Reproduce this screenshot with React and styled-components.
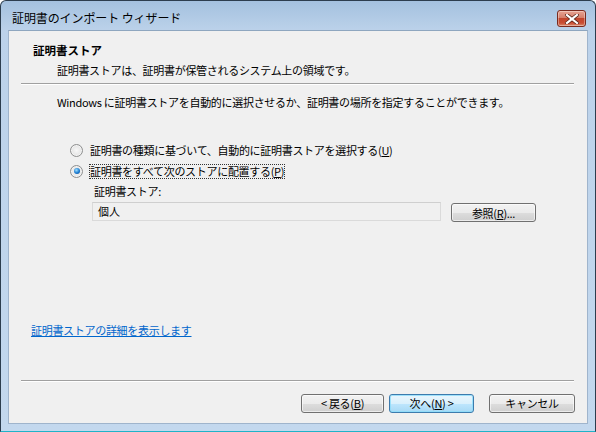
import styled, { createGlobalStyle } from 'styled-components';

const GlobalStyle = createGlobalStyle`
  html, body {
    margin: 0;
    padding: 0;
    background: #ffffff;
  }
  body {
    font-family: 'Noto Sans CJK JP', 'Noto Sans', sans-serif;
    font-size: 11px;
    color: #000;
  }
`;

const App = () => {
  return (
    <>
      <GlobalStyle />
      <Window>
        <TitleBar>
          <TitleText>証明書のインポート ウィザード</TitleText>
          <CloseButton aria-label='close'>
            <svg width='14' height='10' viewBox='0 0 14 10'>
              <path
                d='M2 1 L12 9 M12 1 L2 9'
                stroke='#5a2418'
                strokeWidth='3.6'
                strokeLinecap='square'
              />
              <path
                d='M2 1 L12 9 M12 1 L2 9'
                stroke='#ffffff'
                strokeWidth='2.2'
                strokeLinecap='square'
              />
            </svg>
          </CloseButton>
        </TitleBar>

        <Client>
          <Header>
            <HeaderTitle>証明書ストア</HeaderTitle>
            <HeaderSub>証明書ストアは、証明書が保管されるシステム上の領域です。</HeaderSub>
          </Header>
          <Separator />

          <Body>
            <Intro>
              Windows に証明書ストアを自動的に選択させるか、証明書の場所を指定することができます。
            </Intro>

            <RadioGroup>
              <RadioRow>
                <Radio />
                <RadioLabel>
                  証明書の種類に基づいて、自動的に証明書ストアを選択する(<u>U</u>)
                </RadioLabel>
              </RadioRow>
              <RadioRow>
                <Radio checked />
                <RadioLabel focused>
                  証明書をすべて次のストアに配置する(<u>P</u>)
                </RadioLabel>
              </RadioRow>
            </RadioGroup>

            <StoreBlock>
              <StoreLabel>証明書ストア:</StoreLabel>
              <StoreRow>
                <StoreInput>個人</StoreInput>
                <PushButton width='85px' offset='1px'>
                  参照(<u>R</u>)...
                </PushButton>
              </StoreRow>
            </StoreBlock>

            <Spacer />
            <HelpLink>証明書ストアの詳細を表示します</HelpLink>
          </Body>

          <Separator />
          <Footer>
            <PushButton width='83px'>
              &lt; 戻る(<u>B</u>)
            </PushButton>
            <PushButton width='85px' primary>
              次へ(<u>N</u>) &gt;
            </PushButton>
            <CancelGap />
            <PushButton width='86px'>キャンセル</PushButton>
          </Footer>
        </Client>
      </Window>
    </>
  );
};

export default App;

const Window = styled.div`
  width: 596px;
  height: 432px;
  box-sizing: border-box;
  border: 1px solid #2c3d4e;
  border-bottom-color: #1fb3c8;
  border-radius: 6px 6px 0 0;
  background: linear-gradient(to bottom, #a4c1df 0px, #bcd2ea 30px, #c3d8ee 100%);
  display: flex;
  flex-direction: column;
  overflow: hidden;
`;

const TitleBar = styled.div`
  height: 29px;
  flex-shrink: 0;
  display: flex;
  align-items: center;
  justify-content: space-between;
  padding: 0 9px 0 11px;
`;

const TitleText = styled.div`
  font-size: 12px;
  color: #000;
  margin-top: 4px;
  letter-spacing: -0.1px;
`;

const CloseButton = styled.div`
  width: 29px;
  height: 17px;
  margin-top: 6px;
  border: 1px solid #7a2a1e;
  border-radius: 3px;
  box-sizing: border-box;
  background: linear-gradient(
    to bottom,
    #e8a493 0%,
    #d57f6b 45%,
    #c2452c 50%,
    #c94d33 80%,
    #db8c70 100%
  );
  box-shadow: inset 0 0 0 1px rgba(255, 255, 255, 0.35);
  display: flex;
  align-items: center;
  justify-content: center;
`;

const Client = styled.div`
  flex: 1;
  margin: 0 7px 7px 7px;
  background: #f0f0f0;
  border: 1px solid #9fb4cc;
  border-top-color: #8ea6bf;
  display: flex;
  flex-direction: column;
  padding: 0 13px 0 12px;
`;

const Header = styled.div`
  padding: 11px 0 5px 12px;
  display: flex;
  flex-direction: column;
`;

const HeaderTitle = styled.div`
  font-weight: bold;
  font-size: 11.5px;
  line-height: 16px;
`;

const HeaderSub = styled.div`
  margin: 4px 0 0 24px;
  line-height: 16px;
  letter-spacing: -0.3px;
`;

const Separator = styled.div`
  height: 1px;
  background: #a0a0a0;
  border-bottom: 1px solid #ffffff;
  flex-shrink: 0;
`;

const Body = styled.div`
  flex: 1;
  display: flex;
  flex-direction: column;
  padding: 9px 0 0 0;
`;

const Intro = styled.div`
  margin-left: 36px;
  line-height: 16px;
  letter-spacing: -0.3px;
`;

const RadioGroup = styled.div`
  margin: 32px 0 0 49px;
  display: flex;
  flex-direction: column;
  gap: 5px;
`;

const RadioRow = styled.div`
  display: flex;
  align-items: center;
  height: 16px;
`;

const Radio = styled.span`
  width: 13px;
  height: 13px;
  border-radius: 50%;
  box-sizing: border-box;
  border: 1px solid #8e8f8f;
  background: radial-gradient(circle at 50% 50%, #f8f8f8 0%, #e6e6e6 60%, #d0d0d0 100%);
  box-shadow: inset 0 0 0 1px #f4f4f4;
  margin-right: 6px;
  position: relative;
  flex-shrink: 0;

  &::after {
    content: '';
    display: ${(props) => (props.checked ? 'block' : 'none')};
    position: absolute;
    left: 2.5px;
    top: 2.5px;
    width: 6px;
    height: 6px;
    border-radius: 50%;
    background: radial-gradient(circle at 40% 35%, #9fe0ff 0%, #1a7ad0 55%, #0b4a8a 100%);
  }
`;

const RadioLabel = styled.span`
  line-height: 15px;
  letter-spacing: -0.3px;
  padding: 0 1px;
  outline: ${(props) => (props.focused ? '1px dotted #333' : 'none')};
  outline-offset: -1px;
`;

const StoreBlock = styled.div`
  margin: 4px 0 0 71px;
  display: flex;
  flex-direction: column;
`;

const StoreLabel = styled.div`
  margin-left: 2px;
  line-height: 16px;
  letter-spacing: -0.3px;
`;

const StoreRow = styled.div`
  display: flex;
  align-items: flex-start;
  gap: 10px;
  margin-top: 3px;
`;

const StoreInput = styled.div`
  width: 349px;
  height: 19px;
  box-sizing: border-box;
  border: 1px solid #dadada;
  border-top-color: #cfcfcf;
  background: #f0f0f0;
  padding: 0 5px;
  line-height: 17px;
`;

const PushButton = styled.div`
  width: ${(props) => props.width};
  height: 19px;
  margin-top: ${(props) => props.offset || '0'};
  box-sizing: border-box;
  border: 1px solid ${(props) => (props.primary ? '#3d7bad' : '#707070')};
  border-radius: 3px;
  background: ${(props) =>
    props.primary
      ? 'linear-gradient(to bottom, #eaf6fd 0%, #d9f0fc 50%, #bee6fd 51%, #a7d9f5 100%)'
      : 'linear-gradient(to bottom, #f2f2f2 0%, #ebebeb 50%, #dddddd 51%, #cfcfcf 100%)'};
  box-shadow: inset 0 0 0 1px
    ${(props) => (props.primary ? 'rgba(140, 220, 250, 0.8)' : 'rgba(255, 255, 255, 0.6)')};
  display: flex;
  align-items: center;
  justify-content: center;
  line-height: 16px;
  letter-spacing: -0.3px;
`;

const Spacer = styled.div`
  flex: 1;
`;

const HelpLink = styled.a`
  color: #0066cc;
  text-decoration: underline;
  margin: 0 0 42px 10px;
  line-height: 16px;
  letter-spacing: -0.3px;
  cursor: pointer;
`;

const Footer = styled.div`
  display: flex;
  justify-content: flex-end;
  align-items: center;
  gap: 5px;
  height: 41px;
  padding-top: 1px;
  margin-right: -1px;
  box-sizing: border-box;
`;

const CancelGap = styled.div`
  width: 5px;
`;
